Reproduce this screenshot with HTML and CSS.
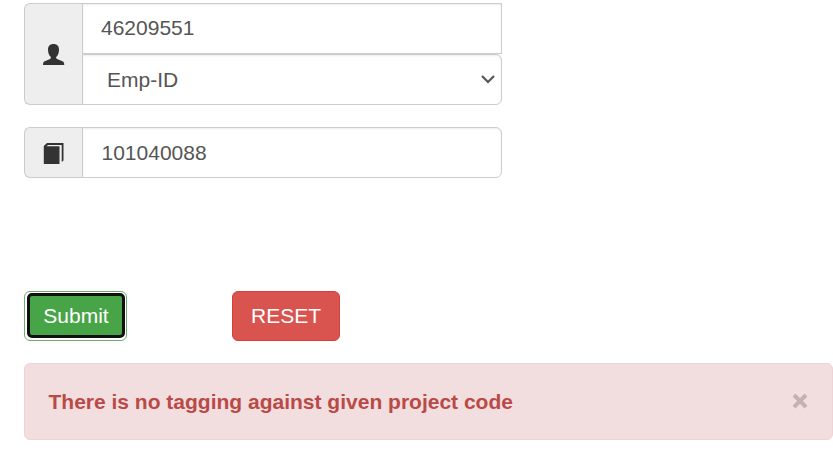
FILE: index.html
```html
<!DOCTYPE html>
<html lang="en">
<head>
<meta charset="utf-8">
<title>Project tagging</title>
<link rel="stylesheet" href="styles.css">
</head>
<body>
<form class="form">
  <div class="input-group">
    <span class="addon">
      <svg class="icon" width="22" height="22" viewBox="0 0 22 22"><path d="M10.500 0C7 0 5 2.200 5 5.500C5 8.500 5.900 11.300 7.600 12.800C8.200 13.600 7.800 14.500 7.100 14.900L1.700 17.300C.5 18 0 19 0 21H21.300C21.300 19 20.700 18 19.500 17.300L14 14.900C13.300 14.500 12.800 13.600 13.400 12.800C15.100 11.300 16 8.500 16 5.500C16 2.200 14 0 10.500 0Z"/></svg>
    </span>
    <div class="fields">
      <div class="control square">46209551</div>
      <div class="control select">Emp-ID
        <svg class="chevron" width="14" height="9" viewBox="0 0 14 9"><path d="M1 1L7 7L13 1"/></svg>
      </div>
    </div>
  </div>
  <div class="input-group">
    <span class="addon">
      <svg class="icon" width="22" height="22" viewBox="0 0 22 22"><path d="M4 0H20.500V17.500L18.700 19V2H5L3.500 3.200H16.500V21H.8V3Z"/></svg>
    </span>
    <div class="fields">
      <div class="control code">101040088</div>
    </div>
  </div>
  <div class="actions">
    <button class="btn submit" type="button"><span class="face">Submit</span></button>
    <button class="btn reset" type="button">RESET</button>
  </div>
</form>
<div class="alert">
  <strong>There is no tagging against given project code</strong>
  <svg class="close" width="16" height="16" viewBox="0 0 16 16"><path d="M2 2L14 14M14 2L2 14"/></svg>
</div>
</body>
</html>
```
FILE: styles.css
```css
* { box-sizing: border-box; }
body {
  margin: 0;
  padding: 3px 0 0 24px;
  background: #fff;
  color: #555;
  font: 21px/30px "Liberation Sans", Arial, sans-serif;
  overflow: hidden;
}
.input-group {
  display: flex;
  width: 478px;
  margin-bottom: 22px;
}
.addon {
  display: flex;
  align-items: center;
  justify-content: center;
  width: 58px;
  background: #eee;
  border: 1px solid #ccc;
  border-right: 0;
  border-radius: 6px 0 0 6px;
}
.icon { fill: #333; margin-left: 1px; margin-top: 2px; }
.fields { flex: 1; }
.control {
  display: flex;
  align-items: center;
  height: 51px;
  padding: 0 6px 0 18px;
  border: 1px solid #ccc;
  border-radius: 0 6px 6px 0;
  box-shadow: inset 0 1px 2px rgba(0, 0, 0, .075);
}
.square { border-radius: 0; padding-bottom: 2px; }
.select { justify-content: space-between; padding-left: 24px; }
.code { padding-left: 18.5px; }
.chevron { fill: none; stroke: #555; stroke-width: 2.200; }
.actions {
  display: flex;
  gap: 105px;
  margin-top: 113px;
}
.btn {
  height: 50px;
  padding: 0;
  border-radius: 6px;
  color: #fff;
  font: inherit;
}
.submit {
  width: 103px;
  padding: 1px 1px 2px 2px;
  background: #fff;
  border: 1px solid #6fab6f;
}
.face {
  display: flex;
  align-items: center;
  justify-content: center;
  height: 45px;
  background: #47a447;
  border: 3px solid #101010;
  border-radius: 5px;
}
.reset {
  width: 108px;
  background: #d9534f;
  border: 1px solid #d43f3a;
}
.alert {
  display: flex;
  align-items: center;
  justify-content: space-between;
  height: 77px;
  margin-top: 22px;
  padding: 0 24px 0 23.5px;
  background: #f2dede;
  border: 1px solid #eed3d7;
  border-radius: 6px;
  color: #b94a48;
}
.close { fill: none; stroke: #c2b2b2; stroke-width: 4; margin-top: -2px; }
```
